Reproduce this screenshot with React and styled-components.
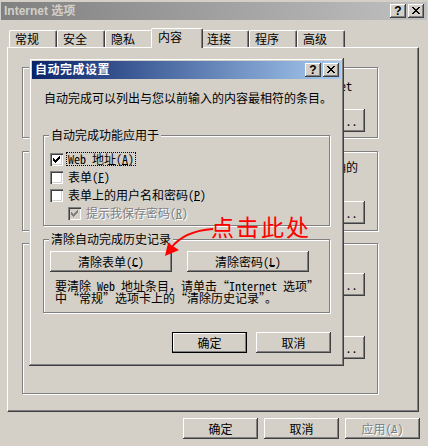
import React from 'react';
import styled, { createGlobalStyle, css } from 'styled-components';

/* half-width Latin (6px) + full-width Han (12px), like the 12px system font */
const UI = `"Noto Sans Mono CJK SC", "Noto Sans CJK SC", sans-serif`;

const GlobalStyle = createGlobalStyle`
  html, body { margin: 0; padding: 0; background: #d4d0c8; }
  body { font-family: ${UI}; font-size: 12px; color: #000; }
  *, *::before, *::after { box-sizing: border-box; }
`;

const raised = css`
  box-shadow: inset -1px -1px #404040, inset 1px 1px #fff, inset -2px -2px #808080, inset 2px 2px #d4d0c8;
`;

const etched = css`
  border: 1px solid #808080;
  box-shadow: inset 1px 1px #fff, 1px 1px #fff;
`;

/* text runs: Han run and half-width Latin run */
const Han = styled.span`
  font-family: ${UI};
`;

const Lat = styled.span`
  font-family: ${UI};
`;

/* "(X)" access key, underline drawn under the middle letter */
const Key = styled(Lat)`
  position: relative;
  &::after {
    content: '';
    position: absolute;
    left: 6px;
    width: 6px;
    bottom: 2px;
    height: 1px;
    background: currentColor;
    ${p => p.$disabled && css`box-shadow: 1px 1px #fff;`}
  }
`;

const Mixed = ({ text = '', accel, disabled }) => {
  const runs = text.match(/[\x20-\x7e]+|[^\x20-\x7e]+/g) || [];
  return (
    <>
      {runs.map((r, i) =>
        /^[\x20-\x7e]+$/.test(r) ? <Lat key={i}>{r}</Lat> : <Han key={i}>{r}</Han>
      )}
      {accel && <Key $disabled={disabled}>({accel})</Key>}
    </>
  );
};

const Window = styled.div`
  position: relative;
  width: 428px;
  height: 446px;
  background: #d4d0c8;
  padding: 2px 1px 0;
  display: flex;
  flex-direction: column;
  overflow: hidden;
  font-family: ${UI};
  font-size: 12px;
`;

const TitleBar = styled.div`
  height: 18px;
  flex: none;
  display: flex;
  align-items: center;
  padding: 0 ${p => (p.$active ? 2 : 3)}px 0 3px;
  background: ${p =>
    p.$active
      ? 'linear-gradient(to right, #0a246a, #a6caf0)'
      : 'linear-gradient(to right, #808080, #c0c0c0)'};
`;

const TitleText = styled.div`
  flex: 1;
  font-family: "Liberation Sans", "Noto Sans CJK SC", sans-serif;
  font-weight: bold;
  font-size: 12px;
  line-height: 14px;
  letter-spacing: ${p => (p.$active ? '0.5px' : '0')};
  color: ${p => (p.$active ? '#fff' : '#d4d0c8')};
  white-space: nowrap;
`;

const TitleButtons = styled.div`
  display: flex;
  gap: 2px;
`;

const TitleButton = styled.div`
  width: 16px;
  height: 14px;
  background: #d4d0c8;
  ${raised};
  display: flex;
  align-items: center;
  justify-content: center;
  font-family: "Liberation Sans", sans-serif;
  font-weight: bold;
  font-size: 12px;
  line-height: 12px;
  padding-bottom: 1px;
`;

const TabRow = styled.div`
  position: relative;
  z-index: 1;
  display: flex;
  align-items: flex-end;
  height: 20px;
  margin: 8px 0 -1px;
  padding-left: 8px;
`;

const Tab = styled.div`
  position: relative;
  flex: none;
  width: ${p => (p.$selected ? 52 : 48)}px;
  height: ${p => (p.$selected ? 20 : 17)}px;
  margin: 0 ${p => (p.$selected ? -2 : 0)}px ${p => (p.$selected ? 0 : 1)}px;
  z-index: ${p => (p.$selected ? 2 : 1)};
  padding: 2px 0 0 ${p => (p.$selected ? 6 : 5)}px;
  line-height: 12px;
  background: #d4d0c8;
  border-top: 1px solid #fff;
  border-left: 1px solid #fff;
  border-right: 1px solid #404040;
  border-radius: 2px 2px 0 0;
  box-shadow: inset -1px 0 #808080;
  white-space: nowrap;
`;

const Panel = styled.div`
  flex: none;
  margin-left: 6px;
  width: 412px;
  height: 365px;
  border-top: 1px solid #fff;
  border-left: 1px solid #fff;
  border-right: 1px solid #404040;
  border-bottom: 1px solid #404040;
  box-shadow: inset -1px -1px #808080;
  padding: 19px 0 0 14px;
  display: flex;
  flex-direction: column;
`;

const BgGroup = styled.div`
  flex: none;
  width: 356px;
  height: ${p => p.$h}px;
  margin-top: ${p => p.$mt || 0}px;
  padding-top: ${p => p.$pt}px;
  ${etched};
  display: flex;
  flex-direction: column;
`;

const BgText = styled.div`
  line-height: 12px;
  text-align: right;
  white-space: nowrap;
  padding-right: ${p => p.$pr}px;
`;

const Button = styled.button`
  flex: none;
  width: ${p => p.$w || 75}px;
  height: ${p => p.$h || 21}px;
  margin: 0;
  padding: 0;
  border: none;
  background: #d4d0c8;
  font-family: ${UI};
  font-size: 12px;
  line-height: 12px;
  color: #000;
  display: flex;
  align-items: center;
  justify-content: center;
  white-space: nowrap;
  overflow: hidden;
  ${raised};
  ${p =>
    p.$default &&
    css`
      box-shadow: inset 0 0 0 1px #000, inset -2px -2px #808080, inset 2px 2px #fff;
    `}
  ${p =>
    p.$disabled &&
    css`
      color: #808080;
      text-shadow: 1px 1px #fff;
    `}
`;

const BgButton = styled(Button)`
  align-self: flex-end;
  margin-right: 12px;
  margin-top: ${p => p.$mt || 0}px;
`;

const MainButtons = styled.div`
  display: flex;
  justify-content: flex-end;
  gap: 6px;
  margin-top: 6px;
  padding-right: 7px;
`;

/* ---------- dialog ---------- */

const Dialog = styled.div`
  position: absolute;
  left: 29px;
  top: 58px;
  width: 315px;
  height: 308px;
  z-index: 5;
  padding: 3px;
  background: #d4d0c8;
  box-shadow: inset -1px -1px #404040, inset 1px 1px #d4d0c8, inset -2px -2px #808080, inset 2px 2px #fff;
  display: flex;
  flex-direction: column;
`;

const DialogBody = styled.div`
  padding: 13px 10px 0 11px;
  display: flex;
  flex-direction: column;
`;

const Intro = styled.div`
  padding-left: 1px;
  line-height: 12px;
  white-space: nowrap;
`;

const GroupBox = styled.div`
  width: 287px;
  height: ${p => p.$h}px;
  margin-top: ${p => p.$mt}px;
  ${etched};
  display: flex;
  flex-direction: column;
  align-items: flex-start;
`;

const Legend = styled.div`
  margin: -7px 0 0 5px;
  padding: 0 2px;
  background: #d4d0c8;
  line-height: 12px;
  white-space: nowrap;
`;

const CheckList = styled.div`
  margin-top: 11px;
  padding-left: 6px;
  display: flex;
  flex-direction: column;
  gap: 4px;
`;

const CheckRow = styled.div`
  height: 14px;
  display: flex;
  align-items: center;
  gap: 3px;
  padding-left: ${p => (p.$indent ? 18 : 0)}px;
`;

const Box = styled.span`
  flex: none;
  width: 13px;
  height: 13px;
  background: ${p => (p.$disabled ? '#d4d0c8' : '#fff')};
  box-shadow: inset 1px 1px #808080, inset 2px 2px #404040, inset -1px -1px #fff, inset -2px -2px #d4d0c8;
  display: flex;
  align-items: center;
  justify-content: center;
`;

const CheckLabel = styled.div`
  height: 14px;
  padding: 0 1px;
  line-height: 12px;
  border: 1px ${p => (p.$focus ? 'dotted #000' : 'solid transparent')};
  white-space: nowrap;
  ${p =>
    p.$disabled &&
    css`
      color: #808080;
      text-shadow: 1px 1px #fff;
    `}
`;

const GroupButtons = styled.div`
  margin-top: 6px;
  padding-left: 6px;
  display: flex;
  gap: 15px;
`;

const NoteLine = styled.div`
  padding-left: 11px;
  margin-top: ${p => (p.$first ? 8 : 0)}px;
  height: 12px;
  line-height: 12px;
  white-space: nowrap;
`;

const DialogButtons = styled.div`
  margin-top: 19px;
  display: flex;
  justify-content: flex-end;
  gap: 9px;
`;

/* ---------- annotation ---------- */

const Callout = styled.div`
  position: absolute;
  left: 211px;
  top: 211px;
  z-index: 10;
  color: #ff0000;
  font-family: "Noto Sans CJK SC", sans-serif;
  font-size: 23px;
  line-height: 30px;
  letter-spacing: 2px;
  white-space: nowrap;
`;

const ArrowSvg = styled.svg`
  position: absolute;
  left: 160px;
  top: 222px;
  z-index: 10;
`;

/* ---------- glyphs ---------- */

const Pixels = ({ rows, w, h, color }) => (
  <svg width={w} height={h} viewBox={`0 0 ${w} ${h}`} shapeRendering="crispEdges">
    {rows.map(([x, y, len], i) => (
      <rect key={i} x={x} y={y} width={len} height={1} fill={color} />
    ))}
  </svg>
);

const CHECK = [
  [6, 0, 1], [5, 1, 2], [0, 2, 1], [4, 2, 3], [0, 3, 2], [3, 3, 3],
  [0, 4, 5], [1, 5, 3], [2, 6, 1],
];

const CLOSE = [
  [0, 0, 2], [6, 0, 2], [1, 1, 2], [5, 1, 2], [2, 2, 4], [3, 3, 2],
  [2, 4, 4], [1, 5, 2], [5, 5, 2], [0, 6, 2], [6, 6, 2],
];

const CheckBox = ({ checked, disabled }) => (
  <Box $disabled={disabled}>
    {checked && <Pixels rows={CHECK} w={7} h={7} color={disabled ? '#808080' : '#000'} />}
  </Box>
);

const Caption = ({ active, children }) => (
  <TitleBar $active={active}>
    <TitleText $active={active}>{children}</TitleText>
    <TitleButtons>
      <TitleButton>?</TitleButton>
      <TitleButton>
        <Pixels rows={CLOSE} w={8} h={7} color="#000" />
      </TitleButton>
    </TitleButtons>
  </TitleBar>
);

const TABS = ['常规', '安全', '隐私', '内容', '连接', '程序', '高级'];

export default function App() {
  return (
    <>
      <GlobalStyle />
      <Window>
        <Caption>Internet 选项</Caption>

        <TabRow>
          {TABS.map(t => (
            <Tab key={t} $selected={t === '内容'}>{t}</Tab>
          ))}
        </TabRow>

        <Panel>
          <BgGroup $h={71} $pt={12}>
            <BgText $pr={25}>
              <Mixed text="分级审查帮助您控制在该计算机上可以查看的 Internet" />
            </BgText>
            <BgButton $h={23} $mt={17}><Mixed text="设置(I)..." /></BgButton>
          </BgGroup>
          <BgGroup $h={80} $mt={13} $pt={9}>
            <BgText $pr={19}>使用证书对您自己、证书颁发机构和发行商进行正确的</BgText>
            <BgButton $h={23} $mt={28}><Mixed text="证书(C)..." /></BgButton>
          </BgGroup>
          <BgGroup $h={151} $mt={12} $pt={29}>
            <BgButton $h={23}><Mixed text="完成(U)..." /></BgButton>
            <BgButton $h={23} $mt={40}><Mixed text="配置(R)..." /></BgButton>
          </BgGroup>
        </Panel>

        <MainButtons>
          <Button>确定</Button>
          <Button>取消</Button>
          <Button $disabled><Mixed text="应用" accel="A" disabled /></Button>
        </MainButtons>

        <Dialog>
          <Caption active>自动完成设置</Caption>
          <DialogBody>
            <Intro>自动完成可以列出与您以前输入的内容最相符的条目。</Intro>

            <GroupBox $h={91} $mt={31}>
              <Legend>自动完成功能应用于</Legend>
              <CheckList>
                <CheckRow>
                  <CheckBox checked />
                  <CheckLabel $focus><Mixed text="Web 地址" accel="A" /></CheckLabel>
                </CheckRow>
                <CheckRow>
                  <CheckBox />
                  <CheckLabel><Mixed text="表单" accel="F" /></CheckLabel>
                </CheckRow>
                <CheckRow>
                  <CheckBox />
                  <CheckLabel><Mixed text="表单上的用户名和密码" accel="P" /></CheckLabel>
                </CheckRow>
                <CheckRow $indent>
                  <CheckBox checked disabled />
                  <CheckLabel $disabled><Mixed text="提示我保存密码" accel="R" disabled /></CheckLabel>
                </CheckRow>
              </CheckList>
            </GroupBox>

            <GroupBox $h={74} $mt={13}>
              <Legend>清除自动完成历史记录</Legend>
              <GroupButtons>
                <Button $w={122}><Mixed text="清除表单" accel="C" /></Button>
                <Button $w={122}><Mixed text="清除密码" accel="L" /></Button>
              </GroupButtons>
              <NoteLine $first>
                <Mixed text="要清除 Web 地址条目，请单击“Internet 选项”" />
              </NoteLine>
              <NoteLine>中“常规”选项卡上的“清除历史记录”。</NoteLine>
            </GroupBox>

            <DialogButtons>
              <Button $default>确定</Button>
              <Button>取消</Button>
            </DialogButtons>
          </DialogBody>
        </Dialog>

        <Callout>点击此处</Callout>
        <ArrowSvg width="60" height="40" viewBox="160 222 60 40">
          <path d="M213 229 C 198 230, 181 235, 171 248" stroke="#ff0000" strokeWidth="2" fill="none" />
          <polygon points="165,256 168,243 179,250" fill="#ff0000" />
        </ArrowSvg>
      </Window>
    </>
  );
}
